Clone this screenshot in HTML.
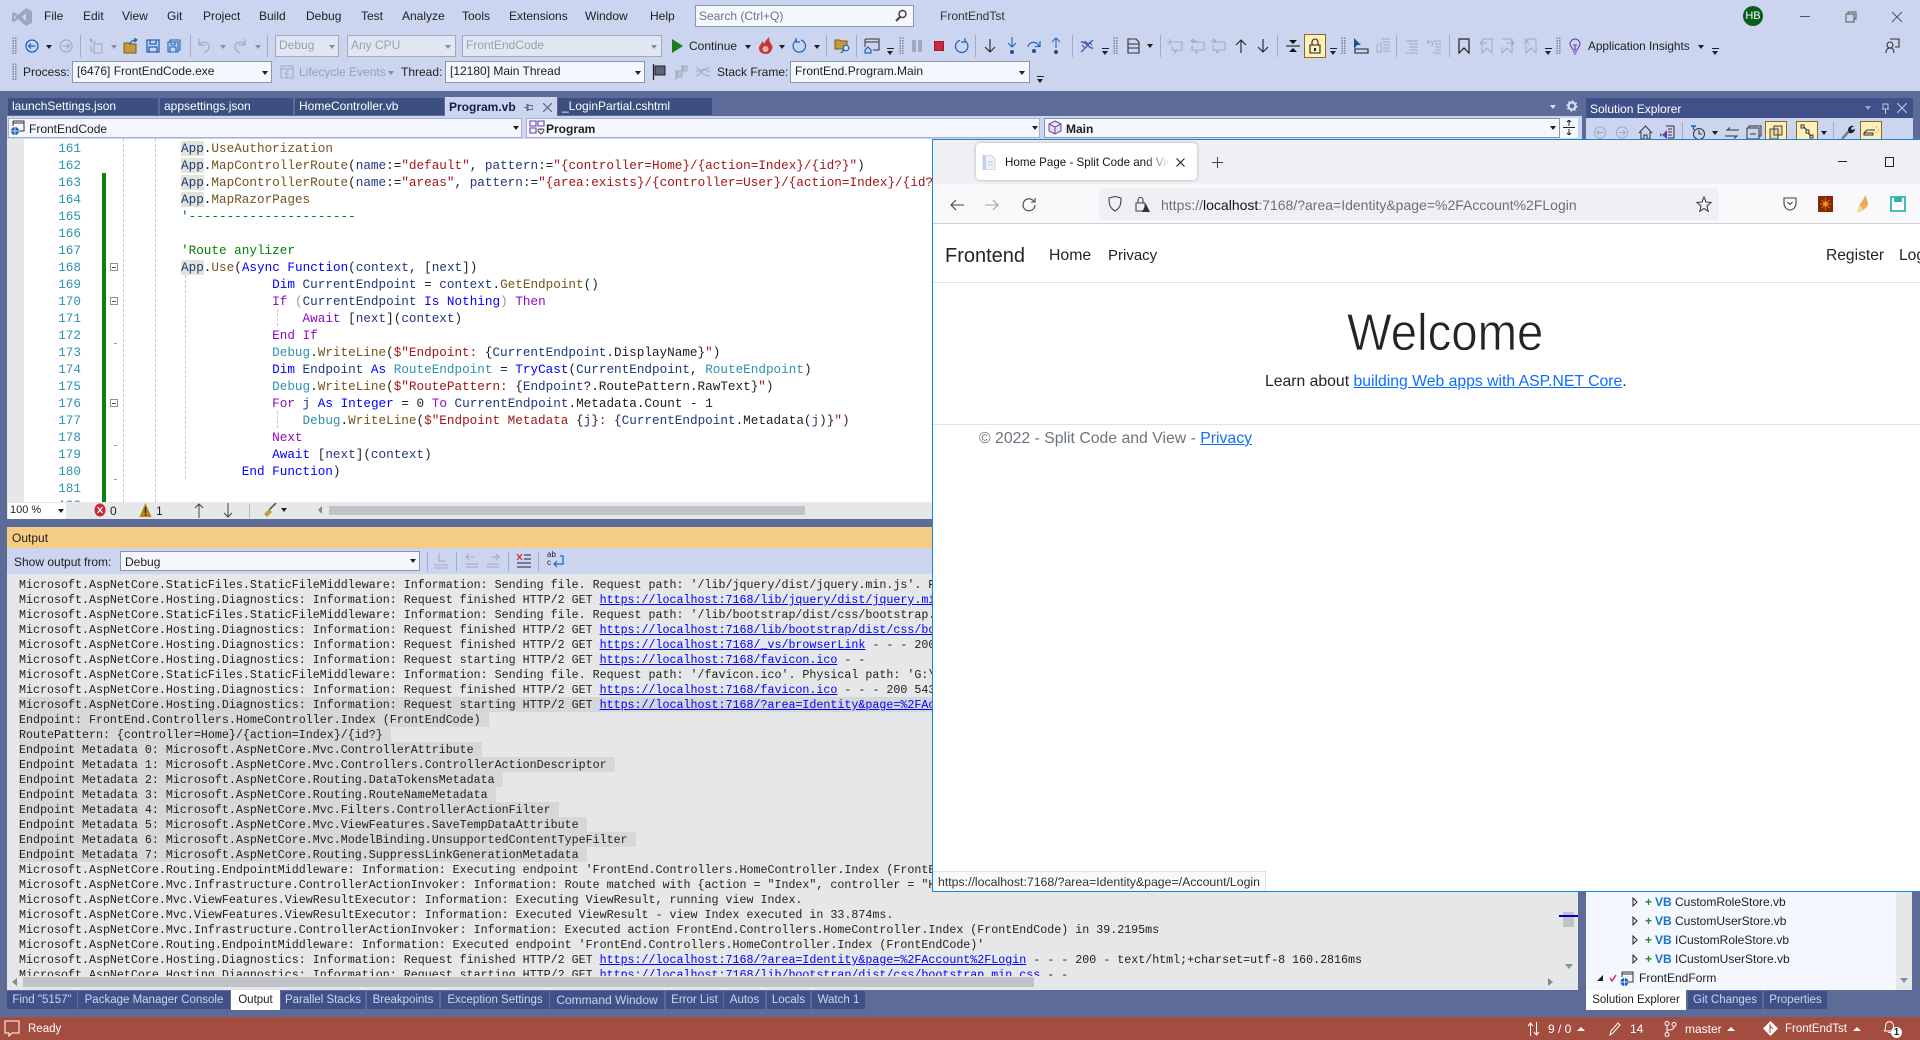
<!DOCTYPE html>
<html><head><meta charset="utf-8"><title>FrontEndTst</title>
<style>
*{box-sizing:border-box}
html,body{margin:0;padding:0;width:1920px;height:1040px;overflow:hidden;background:#5d6b99;font:12px "Liberation Sans",sans-serif;color:#1e1e1e}
.a,svg.i{position:absolute}
.t{position:absolute;white-space:pre;line-height:16px}
.g{color:#9aa0ae}
.sep{position:absolute;width:1px;height:22px;background:#9fabc8;top:35px}
.combo{position:absolute;background:#f5f7fe;border:1px solid #8e96ab;line-height:19px;padding-left:4px;white-space:pre;overflow:hidden}
.dis{background:#e1e6f2;border-color:#a2a9ba;color:#9aa0ae;padding-left:3px}
.dd{position:absolute;width:0;height:0;border-left:3.5px solid transparent;border-right:3.5px solid transparent;border-top:4px solid #1e1e1e}
.dd.gr{border-top-color:#888fa0}
.up{position:absolute;width:0;height:0;border-left:4px solid transparent;border-right:4px solid transparent;border-bottom:4px solid #fff}
.ov{position:absolute;width:7px;height:7px;border-top:1px solid #222}
.ov:after{content:"";position:absolute;left:0;top:2px;border-left:3.5px solid transparent;border-right:3.5px solid transparent;border-top:4px solid #222}
.grip{position:absolute;width:5px;height:17px;background-image:radial-gradient(#7b8299 .7px,transparent 1px);background-size:2.5px 2.5px}
.tab{position:absolute;top:98px;height:17px;background:#3b4f81;color:#fff;line-height:17px;white-space:pre}
.btab{position:absolute;top:991px;height:18px;background:#3f5188;color:#ccd5f0;line-height:19px;font-size:11.5px;text-align:center;white-space:pre}
#code{position:absolute;left:7px;top:139px;width:926px;height:363px;background:#fff;overflow:hidden}
#code .l{position:absolute;left:174px;margin-top:1px;font:12.67px/17px "Liberation Mono",monospace;white-space:pre;color:#1e1e1e}
#code .n{position:absolute;left:37px;width:37px;margin-top:1px;text-align:right;font:12.67px/17px "Liberation Mono",monospace;color:#2b91af}
.k{color:#00f}.c{color:#8f08c4}.s{color:#a31515}.y{color:#2b91af}.m{color:#74531f}.v{color:#1f377f}#code .cm{color:#008000}.h{background:#e0e5d8;color:#1f377f}
#out{position:absolute;left:7px;top:574px;width:1571px;height:402px;overflow:hidden;background:#e6e7e8;font:11.67px/17px "Liberation Mono",monospace;color:#1e1e1e}
#out div{position:absolute;left:12px;white-space:pre;height:15px}
#out a{color:#00f;text-decoration:underline}
#out b{font-weight:400;background:#d6d7d9;display:inline-block;padding-right:8px;height:15px}
.fold{position:absolute;left:103px;width:8px;height:8px;border:1px solid #8a8f99;background:#fff}
.fold:after{content:"";position:absolute;left:1px;top:2.5px;width:4px;height:1px;background:#555}
#br{position:absolute;left:932px;top:139px;width:988px;height:753px;background:#fff;border-left:1px solid #1883d7;border-top:1px solid #1883d7;border-bottom:1px solid #1883d7;overflow:hidden;color:#212529}
</style></head><body>

<!-- top chrome -->
<div class="a" style="left:0;top:0;width:1920px;height:91px;background:#ccd5f0"></div>
<svg class="i" style="left:11px;top:7px" width="22" height="20" viewBox="0 0 22 20"><path d="M15 1l6 3v12l-6 3-8-7-4 3-2-1V6l2-1 4 3zM15 6l-4 4 4 4zM3 8v4l2-2z" fill="#9aa6c6" fill-rule="evenodd"/></svg>
<span class="t" style="left:44px;top:8px">File</span>
<span class="t" style="left:83px;top:8px">Edit</span>
<span class="t" style="left:122px;top:8px">View</span>
<span class="t" style="left:167px;top:8px">Git</span>
<span class="t" style="left:203px;top:8px">Project</span>
<span class="t" style="left:259px;top:8px">Build</span>
<span class="t" style="left:306px;top:8px">Debug</span>
<span class="t" style="left:361px;top:8px">Test</span>
<span class="t" style="left:402px;top:8px">Analyze</span>
<span class="t" style="left:462px;top:8px">Tools</span>
<span class="t" style="left:509px;top:8px">Extensions</span>
<span class="t" style="left:585px;top:8px">Window</span>
<span class="t" style="left:650px;top:8px">Help</span>
<div class="a" style="left:695px;top:5px;width:219px;height:22px;background:#f5f7fe;border:1px solid #8e96ab"></div>
<span class="t" style="left:699px;top:8px;color:#6d7486">Search (Ctrl+Q)</span>
<svg class="i" style="left:893px;top:8px" width="16" height="16" viewBox="0 0 16 16"><circle cx="9.5" cy="6" r="3.5" fill="none" stroke="#444" stroke-width="1.5"/><path d="M7 9l-4 4" stroke="#444" stroke-width="2"/></svg>
<span class="t" style="left:940px;top:8px;color:#333">FrontEndTst</span>
<div class="a" style="left:1743px;top:6px;width:20px;height:20px;border-radius:50%;background:#0a5c1e;color:#fff;font-size:11px;line-height:20px;text-align:center">HB</div>
<div class="a" style="left:1800px;top:16px;width:10px;height:1px;background:#555"></div>
<svg class="i" style="left:1845px;top:11px" width="12" height="12" viewBox="0 0 12 12"><path d="M3 3V1h8v7H9M1 3h8v8H1z" fill="none" stroke="#555"/></svg>
<svg class="i" style="left:1891px;top:11px" width="12" height="12" viewBox="0 0 12 12"><path d="M1 1l10 10M11 1L1 11" stroke="#555"/></svg>

<!-- toolbar row 1 -->
<div class="grip" style="left:12px;top:37px"></div>
<svg class="i" style="left:25px;top:39px" width="14" height="14" viewBox="0 0 14 14"><circle cx="7" cy="7" r="6" fill="none" stroke="#1c63b8" stroke-width="1.3"/><path d="M10.5 7h-7M6 4.5L3.5 7 6 9.5" fill="none" stroke="#1c63b8" stroke-width="1.2"/></svg>
<div class="dd" style="left:46px;top:45px"></div>
<svg class="i" style="left:59px;top:39px" width="14" height="14" viewBox="0 0 14 14"><circle cx="7" cy="7" r="6" fill="none" stroke="#a2a9ba" stroke-width="1.2"/><path d="M3.5 7h7M8 4.5L10.5 7 8 9.5" fill="none" stroke="#a2a9ba" stroke-width="1.2"/></svg>
<div class="sep" style="left:80px"></div>
<svg class="i" style="left:88px;top:38px" width="16" height="16" viewBox="0 0 16 16"><path d="M6 6h8v9H6zM3 4h5M3 8v5h3" fill="none" stroke="#a2a9ba"/><path d="M2 1l2 2M4 1L2 3M1 2h4M3 0v4" stroke="#a2a9ba" stroke-width=".7"/></svg>
<div class="dd gr" style="left:111px;top:45px"></div>
<svg class="i" style="left:123px;top:38px" width="16" height="16" viewBox="0 0 16 16"><path d="M1 5h5l1 1h6v9H1z" fill="#c49a3c" stroke="#7a5b12"/><path d="M7 6c1-3 3-4 6-4M11 0l3 2-3 2" fill="none" stroke="#1c63b8" stroke-width="1.2"/></svg>
<svg class="i" style="left:146px;top:39px" width="14" height="14" viewBox="0 0 14 14"><path d="M1 1h12v12H1zM4 1v4h6V1M3 13V8h8v5" fill="none" stroke="#1c63b8" stroke-width="1.3"/></svg>
<svg class="i" style="left:167px;top:39px" width="14" height="14" viewBox="0 0 14 14"><path d="M3 3V1h10v10h-2M1 3h10v10H1zM4 3v3h4V3M3 13V8h6v5" fill="none" stroke="#1c63b8" stroke-width="1.1"/></svg>
<div class="sep" style="left:190px"></div>
<svg class="i" style="left:197px;top:38px" width="14" height="16" viewBox="0 0 14 16"><path d="M2 1v6h6M2 7c3-5 10-3 10 2 0 3-3 5-5 6" fill="none" stroke="#a2a9ba" stroke-width="1.2"/></svg>
<div class="dd gr" style="left:220px;top:45px"></div>
<svg class="i" style="left:233px;top:38px" width="14" height="16" viewBox="0 0 14 16"><path d="M12 1v6H6M12 7C9 2 2 4 2 9c0 3 3 5 5 6" fill="none" stroke="#a2a9ba" stroke-width="1.2"/></svg>
<div class="dd gr" style="left:255px;top:45px"></div>
<div class="sep" style="left:267px"></div>
<div class="combo dis" style="left:275px;top:35px;width:64px;height:22px">Debug</div><div class="dd gr" style="left:329px;top:45px"></div>
<div class="combo dis" style="left:347px;top:35px;width:109px;height:22px">Any CPU</div><div class="dd gr" style="left:445px;top:45px"></div>
<div class="combo dis" style="left:462px;top:35px;width:200px;height:22px">FrontEndCode</div><div class="dd gr" style="left:651px;top:45px"></div>
<svg class="i" style="left:671px;top:39px" width="12" height="14" viewBox="0 0 12 14"><path d="M1 0l11 7-11 7z" fill="#1f7a1f"/></svg>
<span class="t" style="left:689px;top:38px">Continue</span><div class="dd" style="left:745px;top:45px"></div>
<svg class="i" style="left:758px;top:37px" width="16" height="18" viewBox="0 0 16 18"><path d="M8 17c-4 0-7-2-7-6 0-3 3-4 3-7 1 1 2 2 2 3 1-2 2-5 6-7-2 3 0 5 1 7 1 1 2 3 1 5-1 3-3 5-6 5z" fill="#c8323c"/><circle cx="7.5" cy="12" r="3" fill="#f0b4a8"/></svg>
<div class="dd" style="left:779px;top:45px"></div>
<svg class="i" style="left:792px;top:38px" width="15" height="16" viewBox="0 0 15 16"><path d="M9 2a6.2 6.2 0 1 1-4 .2M4 0v4h4" fill="none" stroke="#1c63b8" stroke-width="1.2"/></svg>
<div class="dd" style="left:814px;top:45px"></div>
<div class="sep" style="left:826px"></div>
<svg class="i" style="left:834px;top:38px" width="17" height="16" viewBox="0 0 17 16"><path d="M1 2h5l1 1h6v8H1z" fill="#c49a3c" stroke="#7a5b12"/><circle cx="12" cy="10" r="2.8" fill="#dbe4f4" stroke="#1c63b8" stroke-width="1.2"/><path d="M10 12l-3 3" stroke="#1c63b8" stroke-width="1.4"/></svg>
<div class="sep" style="left:856px"></div>
<svg class="i" style="left:864px;top:38px" width="16" height="16" viewBox="0 0 16 16"><path d="M1 1h14v11H9M1 4h14M1 1v8" fill="none" stroke="#333"/><path d="M1 12l3-3 3 3v3H1z" fill="none" stroke="#1c63b8" stroke-width="1.2"/></svg>
<div class="ov" style="left:887px;top:48px"></div>
<div class="grip" style="left:899px;top:37px"></div>
<div class="a" style="left:912px;top:40px;width:4px;height:12px;background:#a2a9ba"></div><div class="a" style="left:918px;top:40px;width:4px;height:12px;background:#a2a9ba"></div>
<div class="a" style="left:934px;top:41px;width:10px;height:10px;background:#c8283c;border:1px solid #a01b2c"></div>
<svg class="i" style="left:954px;top:38px" width="15" height="16" viewBox="0 0 15 16"><path d="M11 3a6.2 6.2 0 1 1-5-.7M11 0v4H7" fill="none" stroke="#1c63b8" stroke-width="1.2"/></svg>
<div class="sep" style="left:975px"></div>
<svg class="i" style="left:984px;top:38px" width="12" height="16" viewBox="0 0 12 16"><path d="M6 1v13M1 9l5 5 5-5" fill="none" stroke="#222" stroke-width="1.1"/></svg>
<svg class="i" style="left:1006px;top:37px" width="12" height="18" viewBox="0 0 12 18"><path d="M6 0v10M2 6l4 4 4-4" fill="none" stroke="#1c63b8" stroke-width="1.1"/><circle cx="6" cy="15" r="2" fill="#1c4f94"/></svg>
<svg class="i" style="left:1026px;top:38px" width="16" height="16" viewBox="0 0 16 16"><path d="M2 9c1-6 9-6 11-1M14 3v5.5H9" fill="none" stroke="#1c63b8" stroke-width="1.2"/><circle cx="8" cy="13" r="2" fill="#1c4f94"/></svg>
<svg class="i" style="left:1050px;top:37px" width="12" height="18" viewBox="0 0 12 18"><path d="M6 11V1M2 5l4-4 4 4" fill="none" stroke="#1c63b8" stroke-width="1.1"/><circle cx="6" cy="15" r="2" fill="#1c4f94"/></svg>
<div class="sep" style="left:1072px"></div>
<svg class="i" style="left:1079px;top:38px" width="16" height="16" viewBox="0 0 16 16"><path d="M2 14C7 10 9 6 14 2M2 4c5-1 8 7 12 6" fill="none" stroke="#1c63b8" stroke-width="1.3"/><path d="M3 7l3 3M10 4l3 3M6 3l3 3" stroke="#7f3fa8" stroke-width="1.2"/></svg>
<div class="ov" style="left:1102px;top:48px"></div>
<div class="grip" style="left:1113px;top:37px"></div>
<svg class="i" style="left:1127px;top:38px" width="13" height="16" viewBox="0 0 13 16"><path d="M1 1h8l3 3v11H1zM1 6h11M1 10h11" fill="none" stroke="#333" stroke-width="1.1"/></svg>
<div class="dd" style="left:1147px;top:44px"></div>
<div class="sep" style="left:1160px"></div>
<svg class="i" style="left:1167px;top:38px" width="16" height="16" viewBox="0 0 16 16"><path d="M7 4h8v8h-5l-2 3v-3H5V8M3 1v6M0 4h6" fill="none" stroke="#a2a9ba" stroke-width="1.1"/></svg>
<svg class="i" style="left:1189px;top:38px" width="16" height="16" viewBox="0 0 16 16"><path d="M4 4h11v8H9l-2 3v-3H3V7M5 1L2 3l3 2M2 3h6" fill="none" stroke="#a2a9ba" stroke-width="1.1"/></svg>
<svg class="i" style="left:1210px;top:38px" width="16" height="16" viewBox="0 0 16 16"><path d="M4 4h11v8H9l-2 3v-3H3V7M3 1l3 2-3 2M6 3H0" fill="none" stroke="#a2a9ba" stroke-width="1.1"/></svg>
<svg class="i" style="left:1235px;top:38px" width="12" height="16" viewBox="0 0 12 16"><path d="M6 15V2M1 7l5-5 5 5" fill="none" stroke="#222" stroke-width="1.1"/></svg>
<svg class="i" style="left:1257px;top:38px" width="12" height="16" viewBox="0 0 12 16"><path d="M6 1v13M1 9l5 5 5-5" fill="none" stroke="#222" stroke-width="1.1"/></svg>
<div class="sep" style="left:1277px"></div>
<svg class="i" style="left:1285px;top:38px" width="16" height="16" viewBox="0 0 16 16"><path d="M1 8h14" stroke="#111"/><path d="M4 2h8L8 6zM4 14h8l-4-4z" fill="#111"/></svg>
<div class="a" style="left:1304px;top:34px;width:22px;height:24px;background:#ffefbb;border:1px solid #8a6a1c"></div>
<svg class="i" style="left:1308px;top:38px" width="14" height="16" viewBox="0 0 14 16"><path d="M2 7h10v8H2zM4 7V4a3 3 0 0 1 6 0v3" fill="none" stroke="#222" stroke-width="1.1"/><rect x="6" y="10" width="2" height="3" fill="#222"/></svg>
<div class="ov" style="left:1330px;top:48px"></div>
<div class="grip" style="left:1341px;top:37px"></div>
<svg class="i" style="left:1352px;top:38px" width="17" height="16" viewBox="0 0 17 16"><path d="M2 0l7 7H5l-3 4z" fill="#1c4f94"/><path d="M3 11h13v4H3z" fill="none" stroke="#222" stroke-width="1.1"/></svg>
<svg class="i" style="left:1375px;top:38px" width="16" height="16" viewBox="0 0 16 16"><path d="M6 1h9M8 4h7M8 7h7M8 10h7M8 13h7M6 4v10H2V7l2-2" fill="none" stroke="#a2a9ba"/></svg>
<div class="sep" style="left:1396px"></div>
<svg class="i" style="left:1405px;top:38px" width="14" height="16" viewBox="0 0 14 16"><path d="M1 3h12M4 6h9M4 9h9M4 12h9M1 15h12" stroke="#a2a9ba"/></svg>
<svg class="i" style="left:1426px;top:38px" width="15" height="16" viewBox="0 0 15 16"><path d="M7 3h8M9 6h6M9 9h6M9 12h6M7 15h8M1 4l2-2M1 4l2 2M1 4h4c2 0 2 4 0 4" fill="none" stroke="#a2a9ba"/></svg>
<div class="sep" style="left:1449px"></div>
<svg class="i" style="left:1458px;top:38px" width="12" height="16" viewBox="0 0 12 16"><path d="M1 1h10v14l-5-5-5 5z" fill="none" stroke="#222" stroke-width="1.2"/></svg>
<svg class="i" style="left:1479px;top:38px" width="14" height="16" viewBox="0 0 14 16"><path d="M3 1h10v14l-5-5-5 5V9M1 5l3-3M1 5l3 3M1 5h7" fill="none" stroke="#a2a9ba"/></svg>
<svg class="i" style="left:1501px;top:38px" width="14" height="16" viewBox="0 0 14 16"><path d="M1 1h10v14l-5-5-5 5V9M13 5l-3-3M13 5l-3 3M13 5H6" fill="none" stroke="#a2a9ba"/></svg>
<svg class="i" style="left:1523px;top:38px" width="14" height="16" viewBox="0 0 14 16"><path d="M3 1h10v14l-5-5-5 5V7M1 1l5 5M6 1L1 6" fill="none" stroke="#a2a9ba"/></svg>
<div class="ov" style="left:1545px;top:48px"></div>
<div class="grip" style="left:1556px;top:37px"></div>
<svg class="i" style="left:1569px;top:38px" width="12" height="17" viewBox="0 0 12 17"><path d="M4 12C3 9 1 8 1 6a5 5 0 0 1 10 0c0 2-2 3-3 6zM4 14h4M5 16h2M6 12V7M4 7h4" fill="none" stroke="#6a3da8" stroke-width="1.1"/></svg>
<span class="t" style="left:1588px;top:38px;font-size:11.8px">Application Insights</span>
<div class="dd" style="left:1698px;top:45px"></div>
<div class="ov" style="left:1712px;top:48px"></div>
<svg class="i" style="left:1884px;top:38px" width="16" height="16" viewBox="0 0 16 16"><path d="M6 1h9v8h-4M2 15c0-4 2-5 4-5s4 1 4 5" fill="none" stroke="#333" stroke-width="1.1"/><circle cx="6" cy="7" r="3" fill="#ccd5f0" stroke="#333" stroke-width="1.1"/></svg>

<!-- toolbar row 2 -->
<div class="grip" style="left:12px;top:63px"></div>
<span class="t" style="left:23px;top:64px">Process:</span>
<div class="combo" style="left:72px;top:61px;width:200px;height:22px">[6476] FrontEndCode.exe</div><div class="dd" style="left:262px;top:71px"></div>
<svg class="i" style="left:280px;top:65px" width="14" height="14" viewBox="0 0 14 14"><path d="M1 1h12v12H1zM1 4h12" fill="none" stroke="#a2a9ba"/><path d="M8 5l-3 4h3l-2 4" fill="none" stroke="#a2a9ba"/></svg>
<span class="t g" style="left:299px;top:64px">Lifecycle Events</span><div class="dd gr" style="left:388px;top:71px"></div>
<span class="t" style="left:401px;top:64px">Thread:</span>
<div class="combo" style="left:445px;top:61px;width:200px;height:22px">[12180] Main Thread</div><div class="dd" style="left:635px;top:71px"></div>
<svg class="i" style="left:652px;top:64px" width="14" height="16" viewBox="0 0 14 16"><path d="M1.5 0v16" stroke="#222" stroke-width="1.2"/><path d="M3 2h10v9H3z" fill="#5e6470" stroke="#222"/></svg>
<svg class="i" style="left:673px;top:64px" width="15" height="16" viewBox="0 0 15 16"><path d="M3 6v10M9 1v8" stroke="#a2a9ba"/><path d="M4 7h5v6H4zM10 2h4v5h-4z" fill="#bcc3d4" stroke="#a2a9ba"/></svg>
<svg class="i" style="left:695px;top:66px" width="16" height="12" viewBox="0 0 16 12"><path d="M1 2c4 0 5 8 14 8M1 10c4 0 5-8 14-8M1 6c3-3 10-3 14 0" fill="none" stroke="#a2a9ba"/></svg>
<span class="t" style="left:717px;top:64px">Stack Frame:</span>
<div class="combo" style="left:790px;top:61px;width:240px;height:22px">FrontEnd.Program.Main</div><div class="dd" style="left:1019px;top:71px"></div>
<div class="ov" style="left:1037px;top:76px"></div>

<!-- document tabs -->
<div class="tab" style="left:8px;width:150px;padding-left:4px">launchSettings.json</div>
<div class="tab" style="left:160px;width:133px;padding-left:4px">appsettings.json</div>
<div class="tab" style="left:295px;width:149px;padding-left:4px">HomeController.vb</div>
<div class="a" style="left:445px;top:97px;width:112px;height:19px;background:#ccd5f0"></div>
<span class="t" style="left:449px;top:99px;font-weight:bold;color:#0e1f47">Program.vb</span>
<svg class="i" style="left:524px;top:103px" width="9" height="9" viewBox="0 0 9 9"><path d="M0 4.5h3M3 1.5h1v6H3zM4 2.5h5v4H4" fill="none" stroke="#5e6a85"/></svg>
<svg class="i" style="left:543px;top:103px" width="9" height="9" viewBox="0 0 9 9"><path d="M0 0l9 9M9 0L0 9" stroke="#5e6a85" stroke-width="1.2"/></svg>
<div class="tab" style="left:558px;width:154px;padding-left:4px">_LoginPartial.cshtml</div>
<div class="dd" style="left:1550px;top:105px;border-top-color:#d8def0"></div>
<svg class="i" style="left:1566px;top:100px" width="12" height="12" viewBox="0 0 12 12"><circle cx="6" cy="6" r="3.5" fill="none" stroke="#d8def0" stroke-width="2.2"/><circle cx="6" cy="6" r="5" fill="none" stroke="#d8def0" stroke-width="1.4" stroke-dasharray="1.6 2.3"/></svg>

<!-- nav combos -->
<div class="a" style="left:7px;top:116px;width:1575px;height:23px;background:#ccd5f0"></div>
<div class="combo" style="left:8px;top:118px;width:514px;height:20px;padding-left:20px;border-color:#a9b2cd;line-height:20px">FrontEndCode</div>
<svg class="i" style="left:10px;top:120px" width="16" height="16" viewBox="0 0 16 16"><path d="M3 1h11v10H8M3 1v5M3 3h11" fill="none" stroke="#333"/><circle cx="5" cy="11" r="4" fill="#1c63b8"/><path d="M1 11h8M5 7v8" stroke="#fff" stroke-width=".7"/></svg>
<div class="dd" style="left:513px;top:126px"></div>
<div class="combo" style="left:526px;top:118px;width:514px;height:20px;padding-left:19px;border-color:#a9b2cd;line-height:20px;font-weight:bold">Program</div>
<svg class="i" style="left:529px;top:120px" width="16" height="15" viewBox="0 0 16 15"><path d="M1 1h6v5H1zM9 1h6v5H9zM1 8h6v5H1z" fill="none" stroke="#6a3da8" stroke-width="1.1"/><path d="M9 10c1-2 3-1 3 0 0-1 2-2 3 0 0 2-3 4-3 4s-3-2-3-4z" fill="#eee" stroke="#444"/></svg>
<div class="dd" style="left:1032px;top:126px"></div>
<div class="combo" style="left:1044px;top:118px;width:516px;height:20px;padding-left:21px;border-color:#8e96ab;line-height:20px;font-weight:bold">Main</div>
<svg class="i" style="left:1048px;top:120px" width="14" height="15" viewBox="0 0 14 15"><path d="M7 1l6 3v7l-6 3-6-3V4zM1 4l6 3 6-3M7 7v7" fill="#e4dcf2" stroke="#6a3da8"/></svg>
<div class="dd" style="left:1550px;top:126px"></div>
<div class="a" style="left:1560px;top:118px;width:18px;height:20px;background:#f5f7fe"></div>
<svg class="i" style="left:1563px;top:120px" width="12" height="15" viewBox="0 0 12 15"><path d="M0 7.5h12" stroke="#222"/><path d="M6 0v6M6 9v6M4 2l2-2 2 2M4 13l2 2 2-2" fill="none" stroke="#222"/></svg>

<!-- solution explorer head -->
<div class="a" style="left:1586px;top:98px;width:327px;height:20px;background:#3f5188"></div>
<span class="t" style="left:1590px;top:101px;color:#fff">Solution Explorer</span>
<div class="dd" style="left:1865px;top:106px;border-top-color:#9ba8cc"></div>
<svg class="i" style="left:1881px;top:103px" width="9" height="11" viewBox="0 0 9 11"><path d="M2 1h5v5H2zM1 6h7M4.500 6v5" fill="none" stroke="#c3cce3"/></svg>
<svg class="i" style="left:1897px;top:103px" width="10" height="10" viewBox="0 0 10 10"><path d="M0 0l10 10M10 0L0 10" stroke="#c3cce3" stroke-width="1.1"/></svg>
<div class="a" style="left:1586px;top:118px;width:327px;height:21px;background:#ccd5f0;overflow:hidden"></div>
<svg class="i" style="left:1593px;top:126px" width="14" height="13" viewBox="0 0 14 14"><circle cx="7" cy="7" r="6" fill="none" stroke="#a2a9ba"/><path d="M10.500 7h-7M6 4.500L3.500 7 6 9.500" fill="none" stroke="#a2a9ba"/></svg>
<svg class="i" style="left:1615px;top:126px" width="14" height="13" viewBox="0 0 14 14"><circle cx="7" cy="7" r="6" fill="none" stroke="#a2a9ba"/><path d="M3.500 7h7M8 4.500L10.500 7 8 9.500" fill="none" stroke="#a2a9ba"/></svg>
<svg class="i" style="left:1638px;top:125px" width="15" height="14" viewBox="0 0 15 14"><path d="M1 8l6.500-7L14 8M3 7v7h3v-4h3v4h3V7" fill="none" stroke="#333"/></svg>
<svg class="i" style="left:1659px;top:125px" width="16" height="14" viewBox="0 0 16 14"><path d="M7 1h8v12H9M9 4h4M9 7h4M9 10h4" fill="none" stroke="#333"/><path d="M1 8l2 2 5-5v9l-5-4-2 2z" fill="#6a3da8"/></svg>
<div class="a" style="left:1682px;top:122px;width:1px;height:17px;background:#9fabc8"></div>
<svg class="i" style="left:1690px;top:125px" width="16" height="14" viewBox="0 0 16 14"><circle cx="9" cy="9" r="5.500" fill="none" stroke="#333"/><path d="M9 5v4h3" fill="none" stroke="#333"/><path d="M1 1h5M3.500 1v4" stroke="#1c63b8" stroke-width="1.400"/></svg>
<div class="dd" style="left:1712px;top:131px"></div>
<svg class="i" style="left:1725px;top:127px" width="14" height="12" viewBox="0 0 14 12"><path d="M14 3H2l3-2.500M0 9h12L9 11.500" fill="none" stroke="#333"/></svg>
<svg class="i" style="left:1746px;top:125px" width="16" height="14" viewBox="0 0 16 14"><path d="M3 3V1h12v10h-2M1 3h12v11H1zM4 9h6" fill="none" stroke="#333"/></svg>
<div class="a" style="left:1765px;top:121px;width:22px;height:18px;background:#ffefbb;border:1px solid #8a6a1c;border-bottom:0"></div>
<svg class="i" style="left:1769px;top:125px" width="14" height="14" viewBox="0 0 14 14"><path d="M5 1h8v9H5zM1 4h8v10H1z" fill="#dcc896" fill-opacity=".6" stroke="#444"/></svg>
<div class="a" style="left:1796px;top:121px;width:22px;height:18px;background:#ffefbb;border:1px solid #8a6a1c;border-bottom:0"></div>
<svg class="i" style="left:1800px;top:124px" width="14" height="15" viewBox="0 0 14 15"><path d="M1 1h3v3H1zM6 6h3v3H6zM10 11h3v3h-3zM4 3l3 3M8 9l3 3" fill="none" stroke="#333"/></svg>
<div class="dd" style="left:1821px;top:131px"></div>
<div class="a" style="left:1833px;top:122px;width:1px;height:17px;background:#9fabc8"></div>
<svg class="i" style="left:1841px;top:124px" width="15" height="15" viewBox="0 0 15 15"><path d="M1 15l7-8" stroke="#777" stroke-width="2.400"/><path d="M7 6c0-3 3-5 6-4l-3 2 1 2 3-1c0 3-3 5-6 4z" fill="#222"/></svg>
<div class="a" style="left:1860px;top:121px;width:22px;height:18px;background:#ffefbb;border:1px solid #8a6a1c;border-bottom:0"></div>
<svg class="i" style="left:1863px;top:125px" width="16" height="13" viewBox="0 0 16 13"><path d="M1 8l3-3h8M1 8h9v2H1z" fill="none" stroke="#333"/><path d="M13 2h1M15 5h1M13 7h1" stroke="#b8860b"/></svg>

<!-- editor -->
<div id="code">
<div class="a" style="left:0;top:0;width:17px;height:363px;background:#e6e7e8"></div>
<div class="a" style="left:95px;top:34px;width:4px;height:329px;background:#108010"></div>
<div class="a" style="left:116px;top:0;width:0;height:363px;border-left:1px dashed #c8c8c8"></div>
<div class="a" style="left:148px;top:0;width:0;height:363px;border-left:1px dashed #c8c8c8"></div>
<div class="a" style="left:178px;top:136px;width:0;height:204px;border-left:1px dashed #c8c8c8"></div>
<div class="a" style="left:270px;top:170px;width:0;height:17px;border-left:1px dashed #c8c8c8"></div>
<div class="a" style="left:270px;top:272px;width:0;height:17px;border-left:1px dashed #c8c8c8"></div>
<div class="fold" style="top:124px"></div><div class="fold" style="top:158px"></div><div class="fold" style="top:260px"></div>
<div class="a" style="left:107px;top:204px;width:3px;height:1px;background:#999"></div>
<div class="a" style="left:107px;top:306px;width:3px;height:1px;background:#999"></div>
<div class="a" style="left:107px;top:340px;width:3px;height:1px;background:#999"></div>
<div class="n" style="top:0">161</div><div class="n" style="top:17px">162</div><div class="n" style="top:34px">163</div><div class="n" style="top:51px">164</div><div class="n" style="top:68px">165</div><div class="n" style="top:85px">166</div><div class="n" style="top:102px">167</div><div class="n" style="top:119px">168</div><div class="n" style="top:136px">169</div><div class="n" style="top:153px">170</div><div class="n" style="top:170px">171</div><div class="n" style="top:187px">172</div><div class="n" style="top:204px">173</div><div class="n" style="top:221px">174</div><div class="n" style="top:238px">175</div><div class="n" style="top:255px">176</div><div class="n" style="top:272px">177</div><div class="n" style="top:289px">178</div><div class="n" style="top:306px">179</div><div class="n" style="top:323px">180</div><div class="n" style="top:340px">181</div><div class="n" style="top:357px">182</div>
<div class="l" style="top:0"><span class="h">App</span>.<span class="m">UseAuthorization</span></div>
<div class="l" style="top:17px"><span class="h">App</span>.<span class="m">MapControllerRoute</span>(<span class="v">name</span>:=<span class="s">"default"</span>, <span class="v">pattern</span>:=<span class="s">"{controller=Home}/{action=Index}/{id?}"</span>)</div>
<div class="l" style="top:34px"><span class="h">App</span>.<span class="m">MapControllerRoute</span>(<span class="v">name</span>:=<span class="s">"areas"</span>, <span class="v">pattern</span>:=<span class="s">"{area:exists}/{controller=User}/{action=Index}/{id?}"</span>)</div>
<div class="l" style="top:51px"><span class="h">App</span>.<span class="m">MapRazorPages</span></div>
<div class="l cm" style="top:68px">'----------------------</div>
<div class="l cm" style="top:102px">'Route anylizer</div>
<div class="l" style="top:119px"><span class="h">App</span>.<span class="m">Use</span>(<span class="k">Async</span> <span class="k">Function</span>(<span class="v">context</span>, [<span class="v">next</span>])</div>
<div class="l" style="top:136px">            <span class="k">Dim</span> <span class="v">CurrentEndpoint</span> = <span class="v">context</span>.<span class="m">GetEndpoint</span>()</div>
<div class="l" style="top:153px">            <span class="c">If</span> <span style="color:#999">(</span><span class="v">CurrentEndpoint</span> <span class="k">Is</span> <span class="k">Nothing</span><span style="color:#999">)</span> <span class="c">Then</span></div>
<div class="l" style="top:170px">                <span class="c">Await</span> [<span class="v">next</span>](<span class="v">context</span>)</div>
<div class="l" style="top:187px">            <span class="c">End If</span></div>
<div class="l" style="top:204px">            <span class="y">Debug</span>.<span class="m">WriteLine</span>(<span class="s">$"Endpoint: </span>{<span class="v">CurrentEndpoint</span>.DisplayName}<span class="s">"</span>)</div>
<div class="l" style="top:221px">            <span class="k">Dim</span> <span class="v">Endpoint</span> <span class="k">As</span> <span class="y">RouteEndpoint</span> = <span class="k">TryCast</span>(<span class="v">CurrentEndpoint</span>, <span class="y">RouteEndpoint</span>)</div>
<div class="l" style="top:238px">            <span class="y">Debug</span>.<span class="m">WriteLine</span>(<span class="s">$"RoutePattern: </span>{<span class="v">Endpoint</span>?.RoutePattern.RawText}<span class="s">"</span>)</div>
<div class="l" style="top:255px">            <span class="c">For</span> <span class="v">j</span> <span class="k">As</span> <span class="k">Integer</span> = 0 <span class="c">To</span> <span class="v">CurrentEndpoint</span>.Metadata.Count - 1</div>
<div class="l" style="top:272px">                <span class="y">Debug</span>.<span class="m">WriteLine</span>(<span class="s">$"Endpoint Metadata </span>{<span class="v">j</span>}<span class="s">: </span>{<span class="v">CurrentEndpoint</span>.Metadata(<span class="v">j</span>)}<span class="s">"</span>)</div>
<div class="l" style="top:289px">            <span class="c">Next</span></div>
<div class="l" style="top:306px">            <span class="k">Await</span> [<span class="v">next</span>](<span class="v">context</span>)</div>
<div class="l" style="top:323px">        <span class="k">End Function</span>)</div>
</div>
<!-- editor bottom bar -->
<div class="a" style="left:7px;top:502px;width:926px;height:17px;background:#e6e7e8"></div>
<div class="a" style="left:8px;top:503px;width:58px;height:16px;background:#fff;line-height:15px;font-size:11px;padding-left:2px">100 %</div><div class="dd" style="left:58px;top:509px"></div>
<svg class="i" style="left:94px;top:503px" width="12" height="14" viewBox="0 0 12 14"><ellipse cx="6" cy="7" rx="5.500" ry="6.500" fill="#c8283c"/><path d="M3.500 4l5 6M8.500 4l-5 6" stroke="#fff" stroke-width="1.200"/></svg>
<span class="t" style="left:110px;top:503px">0</span>
<svg class="i" style="left:139px;top:503px" width="13" height="14" viewBox="0 0 13 14"><path d="M6.500 0l6 14H.500z" fill="#b8860b"/><path d="M6.500 4v6M6.500 11v1.500" stroke="#222" stroke-width="1.300"/></svg>
<span class="t" style="left:156px;top:503px">1</span>
<svg class="i" style="left:194px;top:503px" width="10" height="15" viewBox="0 0 10 15"><path d="M5 15V1M1 5l4-4 4 4" fill="none" stroke="#444"/></svg>
<svg class="i" style="left:223px;top:503px" width="10" height="15" viewBox="0 0 10 15"><path d="M5 0v14M1 10l4 4 4-4" fill="none" stroke="#444"/></svg>
<div class="a" style="left:249px;top:504px;width:1px;height:14px;background:#b5b8c0"></div>
<svg class="i" style="left:263px;top:503px" width="15" height="14" viewBox="0 0 15 14"><path d="M13 0L6 7" stroke="#555" stroke-width="1.600"/><path d="M6 6l3 3-5 5-3-3z" fill="#b8a040"/></svg>
<div class="dd" style="left:281px;top:508px"></div>
<div class="a" style="left:318px;top:506px;border-right:4px solid #888;border-top:4px solid transparent;border-bottom:4px solid transparent"></div>
<div class="a" style="left:329px;top:506px;width:476px;height:9px;background:#c2c3c9"></div>

<!-- output -->
<div class="a" style="left:7px;top:527px;width:926px;height:21px;background:#f5cc84;line-height:22px;padding-left:5px">Output</div>
<div class="a" style="left:7px;top:548px;width:926px;height:26px;background:#ccd5f0"></div>
<span class="t" style="left:14px;top:554px">Show output from:</span>
<div class="combo" style="left:120px;top:551px;width:300px;height:20px;line-height:20px">Debug</div><div class="dd" style="left:410px;top:559px"></div>
<div class="a" style="left:427px;top:552px;width:1px;height:19px;background:#9fabc8"></div>
<svg class="i" style="left:433px;top:552px" width="16" height="18" viewBox="0 0 16 18"><path d="M1 16h14M1 13h14M6 1v8h6M6 5" fill="none" stroke="#a2a9ba"/></svg>
<div class="a" style="left:456px;top:552px;width:1px;height:19px;background:#9fabc8"></div>
<svg class="i" style="left:465px;top:552px" width="14" height="18" viewBox="0 0 14 18"><path d="M1 12h12M1 15h12M1 5h8M4 2L1 5l3 3" fill="none" stroke="#a2a9ba"/></svg>
<svg class="i" style="left:486px;top:552px" width="14" height="18" viewBox="0 0 14 18"><path d="M1 12h12M1 15h12M13 5H5M10 2l3 3-3 3" fill="none" stroke="#a2a9ba"/></svg>
<div class="a" style="left:508px;top:552px;width:1px;height:19px;background:#9fabc8"></div>
<svg class="i" style="left:516px;top:552px" width="16" height="18" viewBox="0 0 16 18"><path d="M8 3h7M8 7h7M1 11h14M1 15h14" stroke="#222"/><path d="M1 2l5 6M6 2L1 8" stroke="#c8283c" stroke-width="1.200"/></svg>
<div class="a" style="left:538px;top:552px;width:1px;height:19px;background:#9fabc8"></div>
<span class="t" style="left:547px;top:551px;font-size:8px;line-height:8px;color:#222">ab<br>c</span>
<svg class="i" style="left:552px;top:553px" width="12" height="16" viewBox="0 0 12 16"><path d="M8 3h3v8H2M5 8l-3 3 3 3" fill="none" stroke="#1c63b8" stroke-width="1.200"/></svg>

<div id="out">
<div style="top:-19px">Microsoft.AspNetCore.Hosting.Diagnostics: Information: Request starting HTTP/2 GET <a>https://localhost:7168/lib/jquery/dist/jquery.min.js</a> - -</div>
<div style="top:3px">Microsoft.AspNetCore.StaticFiles.StaticFileMiddleware: Information: Sending file. Request path: '/lib/jquery/dist/jquery.min.js'. Physical path: 'G:\</div>
<div style="top:18px">Microsoft.AspNetCore.Hosting.Diagnostics: Information: Request finished HTTP/2 GET <a>https://localhost:7168/lib/jquery/dist/jquery.min.js</a> - - - 200</div>
<div style="top:33px">Microsoft.AspNetCore.StaticFiles.StaticFileMiddleware: Information: Sending file. Request path: '/lib/bootstrap/dist/css/bootstrap.min.css'. Physical</div>
<div style="top:48px">Microsoft.AspNetCore.Hosting.Diagnostics: Information: Request finished HTTP/2 GET <a>https://localhost:7168/lib/bootstrap/dist/css/bootstrap.min.css</a> - - -</div>
<div style="top:63px">Microsoft.AspNetCore.Hosting.Diagnostics: Information: Request finished HTTP/2 GET <a>https://localhost:7168/_vs/browserLink</a> - - - 200 - text/javascript</div>
<div style="top:78px">Microsoft.AspNetCore.Hosting.Diagnostics: Information: Request starting HTTP/2 GET <a>https://localhost:7168/favicon.ico</a> - -</div>
<div style="top:93px">Microsoft.AspNetCore.StaticFiles.StaticFileMiddleware: Information: Sending file. Request path: '/favicon.ico'. Physical path: 'G:\OneDrive\</div>
<div style="top:108px">Microsoft.AspNetCore.Hosting.Diagnostics: Information: Request finished HTTP/2 GET <a>https://localhost:7168/favicon.ico</a> - - - 200 5430 image/x-icon</div>
<div style="top:123px"><b>Microsoft.AspNetCore.Hosting.Diagnostics: Information: Request starting HTTP/2 GET <a>https://localhost:7168/?area=Identity&amp;page=%2FAccount%2FLogin</a> - -                    </b></div>
<div style="top:138px"><b>Endpoint: FrontEnd.Controllers.HomeController.Index (FrontEndCode)</b></div>
<div style="top:153px"><b>RoutePattern: {controller=Home}/{action=Index}/{id?}</b></div>
<div style="top:168px"><b>Endpoint Metadata 0: Microsoft.AspNetCore.Mvc.ControllerAttribute</b></div>
<div style="top:183px"><b>Endpoint Metadata 1: Microsoft.AspNetCore.Mvc.Controllers.ControllerActionDescriptor</b></div>
<div style="top:198px"><b>Endpoint Metadata 2: Microsoft.AspNetCore.Routing.DataTokensMetadata</b></div>
<div style="top:213px"><b>Endpoint Metadata 3: Microsoft.AspNetCore.Routing.RouteNameMetadata</b></div>
<div style="top:228px"><b>Endpoint Metadata 4: Microsoft.AspNetCore.Mvc.Filters.ControllerActionFilter</b></div>
<div style="top:243px"><b>Endpoint Metadata 5: Microsoft.AspNetCore.Mvc.ViewFeatures.SaveTempDataAttribute</b></div>
<div style="top:258px"><b>Endpoint Metadata 6: Microsoft.AspNetCore.Mvc.ModelBinding.UnsupportedContentTypeFilter</b></div>
<div style="top:273px"><b>Endpoint Metadata 7: Microsoft.AspNetCore.Routing.SuppressLinkGenerationMetadata</b></div>
<div style="top:288px">Microsoft.AspNetCore.Routing.EndpointMiddleware: Information: Executing endpoint 'FrontEnd.Controllers.HomeController.Index (FrontEndCode)'</div>
<div style="top:303px">Microsoft.AspNetCore.Mvc.Infrastructure.ControllerActionInvoker: Information: Route matched with {action = "Index", controller = "Home", page = ""}.</div>
<div style="top:318px">Microsoft.AspNetCore.Mvc.ViewFeatures.ViewResultExecutor: Information: Executing ViewResult, running view Index.</div>
<div style="top:333px">Microsoft.AspNetCore.Mvc.ViewFeatures.ViewResultExecutor: Information: Executed ViewResult - view Index executed in 33.874ms.</div>
<div style="top:348px">Microsoft.AspNetCore.Mvc.Infrastructure.ControllerActionInvoker: Information: Executed action FrontEnd.Controllers.HomeController.Index (FrontEndCode) in 39.2195ms</div>
<div style="top:363px">Microsoft.AspNetCore.Routing.EndpointMiddleware: Information: Executed endpoint 'FrontEnd.Controllers.HomeController.Index (FrontEndCode)'</div>
<div style="top:378px">Microsoft.AspNetCore.Hosting.Diagnostics: Information: Request finished HTTP/2 GET <a>https://localhost:7168/?area=Identity&amp;page=%2FAccount%2FLogin</a> - - - 200 - text/html;+charset=utf-8 160.2816ms</div>
<div style="top:393px">Microsoft.AspNetCore.Hosting.Diagnostics: Information: Request starting HTTP/2 GET <a>https://localhost:7168/lib/bootstrap/dist/css/bootstrap.min.css</a> - -</div>
</div>
<div class="a" style="left:7px;top:976px;width:1571px;height:14px;background:#e6e7e8"></div>
<div class="a" style="left:23px;top:977px;width:1011px;height:10px;background:#c2c3c9"></div>
<div class="a" style="left:12px;top:978px;border-right:5px solid #888;border-top:4px solid transparent;border-bottom:4px solid transparent"></div>
<div class="a" style="left:1548px;top:978px;border-left:5px solid #888;border-top:4px solid transparent;border-bottom:4px solid transparent"></div>
<div class="a" style="left:1563px;top:912px;width:11px;height:15px;background:#c2c3c9"></div>
<div class="a" style="left:1559px;top:915px;width:19px;height:2px;background:#0000c8"></div>
<div class="dd gr" style="left:1565px;top:964px;border-left-width:4px;border-right-width:4px;border-top-width:5px"></div>

<!-- solution explorer lower -->
<div class="a" style="left:1586px;top:892px;width:310px;height:98px;background:#f5f7fe"></div>
<div class="a" style="left:1896px;top:892px;width:16px;height:98px;background:#e6e7e8"></div>
<div class="dd gr" style="left:1900px;top:978px;border-left-width:4px;border-right-width:4px;border-top-width:5px"></div>
<svg class="i" style="left:1632px;top:897px" width="6" height="10" viewBox="0 0 6 10"><path d="M1 1l4 4-4 4z" fill="#f5f7fe" stroke="#222"/></svg>
<svg class="i" style="left:1632px;top:916px" width="6" height="10" viewBox="0 0 6 10"><path d="M1 1l4 4-4 4z" fill="#f5f7fe" stroke="#222"/></svg>
<svg class="i" style="left:1632px;top:935px" width="6" height="10" viewBox="0 0 6 10"><path d="M1 1l4 4-4 4z" fill="#f5f7fe" stroke="#222"/></svg>
<svg class="i" style="left:1632px;top:954px" width="6" height="10" viewBox="0 0 6 10"><path d="M1 1l4 4-4 4z" fill="#f5f7fe" stroke="#222"/></svg>
<span class="t" style="left:1645px;top:894px;color:#1f8a3a;font-weight:bold">+</span><span class="t" style="left:1655px;top:894px;color:#1b73c4;font-weight:bold">VB</span><span class="t" style="left:1675px;top:894px">CustomRoleStore.vb</span>
<span class="t" style="left:1645px;top:913px;color:#1f8a3a;font-weight:bold">+</span><span class="t" style="left:1655px;top:913px;color:#1b73c4;font-weight:bold">VB</span><span class="t" style="left:1675px;top:913px">CustomUserStore.vb</span>
<span class="t" style="left:1645px;top:932px;color:#1f8a3a;font-weight:bold">+</span><span class="t" style="left:1655px;top:932px;color:#1b73c4;font-weight:bold">VB</span><span class="t" style="left:1675px;top:932px">ICustomRoleStore.vb</span>
<span class="t" style="left:1645px;top:951px;color:#1f8a3a;font-weight:bold">+</span><span class="t" style="left:1655px;top:951px;color:#1b73c4;font-weight:bold">VB</span><span class="t" style="left:1675px;top:951px">ICustomUserStore.vb</span>
<svg class="i" style="left:1596px;top:974px" width="8" height="8" viewBox="0 0 8 8"><path d="M7 1v6H1z" fill="#222"/></svg>
<svg class="i" style="left:1609px;top:974px" width="8" height="8" viewBox="0 0 8 8"><path d="M1 4l2 3 4-6" fill="none" stroke="#c8283c" stroke-width="1.300"/></svg>
<svg class="i" style="left:1619px;top:971px" width="16" height="16" viewBox="0 0 16 16"><path d="M3 1h11v10H8M3 1v5M3 3h11" fill="none" stroke="#333"/><circle cx="5.500" cy="11" r="4" fill="#1c63b8"/><path d="M1.500 11h8M5.500 7v8" stroke="#fff" stroke-width=".7"/></svg>
<span class="t" style="left:1639px;top:970px">FrontEndForm</span>

<!-- bottom tabs -->
<div class="btab" style="left:7px;width:70px">Find "5157"</div>
<div class="btab" style="left:78px;width:152px">Package Manager Console</div>
<div class="btab" style="left:231px;width:49px;background:#fff;color:#1e1e1e;top:990px;height:20px;line-height:21px">Output</div>
<div class="btab" style="left:281px;width:84px">Parallel Stacks</div>
<div class="btab" style="left:367px;width:72px">Breakpoints</div>
<div class="btab" style="left:441px;width:108px">Exception Settings</div>
<div class="btab" style="left:550px;width:114px;font-size:12px">Command Window</div>
<div class="btab" style="left:666px;width:57px">Error List</div>
<div class="btab" style="left:724px;width:41px">Autos</div>
<div class="btab" style="left:767px;width:43px">Locals</div>
<div class="btab" style="left:812px;width:53px">Watch 1</div>
<div class="btab" style="left:1586px;width:100px;background:#fff;color:#1e1e1e;top:990px;height:20px;line-height:21px">Solution Explorer</div>
<div class="btab" style="left:1688px;width:74px">Git Changes</div>
<div class="btab" style="left:1764px;width:63px">Properties</div>

<!-- status bar -->
<div class="a" style="left:0;top:1017px;width:1920px;height:23px;background:#a34c40"></div>
<svg class="i" style="left:4px;top:1020px" width="16" height="17" viewBox="0 0 16 17"><path d="M1 1h14v12H8l-3 3v-3H1z" fill="none" stroke="#fff"/></svg>
<span class="t" style="left:28px;top:1021px;color:#fff;font-size:11.5px">Ready</span>
<svg class="i" style="left:1527px;top:1022px" width="13" height="14" viewBox="0 0 13 14"><path d="M3.500 14V1M1 4l2.500-3L6 4M9.500 0v13M7 10l2.500 3 2.500-3" fill="none" stroke="#fff"/></svg>
<span class="t" style="left:1548px;top:1021px;color:#fff">9 / 0</span><div class="up" style="left:1577px;top:1027px"></div>
<svg class="i" style="left:1609px;top:1022px" width="12" height="14" viewBox="0 0 12 14"><path d="M1 13l1-4 7-8 2 2-7 8z" fill="none" stroke="#fff"/></svg>
<span class="t" style="left:1630px;top:1021px;color:#fff">14</span>
<svg class="i" style="left:1664px;top:1021px" width="13" height="16" viewBox="0 0 13 16"><circle cx="3" cy="2.500" r="2" fill="none" stroke="#fff"/><circle cx="3" cy="13.500" r="2" fill="none" stroke="#fff"/><circle cx="10" cy="3.500" r="2" fill="none" stroke="#fff"/><path d="M3 4.500v7M3 9c3 0 7 0 7-3.500" fill="none" stroke="#fff"/></svg>
<span class="t" style="left:1685px;top:1021px;color:#fff">master</span><div class="up" style="left:1727px;top:1027px"></div>
<svg class="i" style="left:1763px;top:1021px" width="15" height="15" viewBox="0 0 15 15"><path d="M7.500 0l7.500 7.500-7.500 7.500L0 7.500z" fill="#fff"/><path d="M7 3l0 9M7 5l3 3" stroke="#a34c40"/></svg>
<span class="t" style="left:1785px;top:1021px;color:#fff;font-size:11.5px">FrontEndTst</span><div class="up" style="left:1853px;top:1027px"></div>
<svg class="i" style="left:1883px;top:1020px" width="12" height="14" viewBox="0 0 12 14"><path d="M1 11c2-1 1-4 2-7s6-3 7 0 0 6 2 7zM5 12.500h3" fill="none" stroke="#fff"/></svg>
<div class="a" style="left:1891px;top:1027px;width:11px;height:11px;border-radius:50%;background:#fff;color:#222;font-size:10px;font-weight:bold;line-height:11px;text-align:center">1</div>

<!-- browser window -->
<div id="br">
<div class="a" style="left:0;top:0;width:987px;height:44px;background:#f0f0f4"></div>
<div class="a" style="left:43px;top:3px;width:221px;height:37px;background:#fff;border-radius:4px;box-shadow:0 0 3px rgba(0,0,0,.3)"></div>
<svg class="i" style="left:49px;top:15px" width="14" height="15" viewBox="0 0 14 15"><path d="M1 0h8l4 4v11H1z" fill="#eef1f7" stroke="#b8c0d0" stroke-width=".7"/><path d="M1 0h3v15H1z" fill="#bcd3ea"/><path d="M6 7h5M6 10h5" stroke="#c0c6d2"/></svg>
<span class="t" style="left:72px;top:15px;width:165px;overflow:hidden;font-size:11.6px;color:#15141a;-webkit-mask-image:linear-gradient(to right,#000 85%,transparent 100%);mask-image:linear-gradient(to right,#000 85%,transparent 100%)">Home Page - Split Code and View</span>
<svg class="i" style="left:243px;top:18px" width="9" height="9" viewBox="0 0 9 9"><path d="M.5.500l8 8M8.500.500l-8 8" stroke="#222" stroke-width="1.100"/></svg>
<svg class="i" style="left:279px;top:17px" width="11" height="11" viewBox="0 0 11 11"><path d="M5.500 0v11M0 5.500h11" stroke="#444"/></svg>
<div class="a" style="left:905px;top:21px;width:9px;height:1px;background:#222"></div>
<div class="a" style="left:952px;top:17px;width:9px;height:10px;border:1px solid #222"></div>
<div class="a" style="left:0;top:44px;width:987px;height:40px;background:#f9f9fb;border-bottom:1px solid #d0d0d4"></div>
<svg class="i" style="left:17px;top:58px" width="14" height="14" viewBox="0 0 14 14"><path d="M14 7H1M6 2L1 7l5 5" fill="none" stroke="#444" stroke-width="1.100"/></svg>
<svg class="i" style="left:52px;top:58px" width="14" height="14" viewBox="0 0 14 14"><path d="M0 7h13M8 2l5 5-5 5" fill="none" stroke="#a0a0a8" stroke-width="1.100"/></svg>
<svg class="i" style="left:89px;top:58px" width="14" height="14" viewBox="0 0 14 14"><path d="M12 3.500A6 6 0 1 0 13 7M13 0v4H9" fill="none" stroke="#444" stroke-width="1.100"/></svg>
<div class="a" style="left:166px;top:48px;width:620px;height:32px;background:#f0f0f4;border-radius:4px"></div>
<svg class="i" style="left:175px;top:56px" width="14" height="16" viewBox="0 0 14 16"><path d="M1 2l6-1.500L13 2c0 7-1 10-6 13C2 12 1 9 1 2z" fill="none" stroke="#444" stroke-width="1.100"/></svg>
<svg class="i" style="left:201px;top:56px" width="16" height="16" viewBox="0 0 16 16"><path d="M2 7h9v8H2zM4 7V4a2.500 2.500 0 0 1 5 0v3" fill="none" stroke="#444" stroke-width="1.100"/><path d="M12 8l4 8H8z" fill="#333"/></svg>
<span class="t" style="left:228px;top:56px;font-size:14px;color:#6e6e78;line-height:18px">https://<span style="color:#15141a">localhost</span>:7168/?area=Identity&amp;page=%2FAccount%2FLogin</span>
<svg class="i" style="left:763px;top:56px" width="16" height="16" viewBox="0 0 16 16"><path d="M8 1l2 5 5 .5-4 3.500 1.200 5.200L8 12.500 3.800 15.200 5 10 1 6.500 6 6z" fill="none" stroke="#444" stroke-width="1.100"/></svg>
<svg class="i" style="left:850px;top:57px" width="14" height="14" viewBox="0 0 14 14"><path d="M1 1h12v5a6 7 0 0 1-12 0zM4.500 5L7 7.500 9.500 5" fill="none" stroke="#444" stroke-width="1.100"/></svg>
<div class="a" style="left:885px;top:56px;width:15px;height:16px;background:#8a2500"></div>
<svg class="i" style="left:887px;top:58px" width="11" height="12" viewBox="0 0 11 12"><circle cx="5.500" cy="6" r="2.500" fill="#e8932a"/><path d="M5.500 0v12M0 6h11M1.500 2l8 8M9.500 2l-8 8" stroke="#e8932a" stroke-width=".8"/></svg>
<svg class="i" style="left:922px;top:55px" width="15" height="18" viewBox="0 0 15 18"><path d="M10 0c1 3 3 5 3 9-1 5-9 9-12 7 3-1 2-3 3-5 1-3 4-4 6-11z" fill="#e8ac4c"/><path d="M4 10c2 1 4 3 4 6-3 1-5 1-7 0 2-1 3-3 3-6z" fill="#eed8a8"/></svg>
<svg class="i" style="left:957px;top:56px" width="16" height="16" viewBox="0 0 16 16"><path d="M1 1h14v14H1z" fill="#fff" stroke="#2fb5b0" stroke-width="1.800"/><path d="M4 1h8v5H4z" fill="#2fb5b0"/></svg>

<span class="t" style="left:12px;top:104px;font-size:20px;line-height:24px;color:#212529">Frontend</span>
<span class="t" style="left:116px;top:107px;font-size:15.8px;line-height:18px;color:#212529">Home</span>
<span class="t" style="left:175px;top:107px;font-size:15px;line-height:18px;color:#212529">Privacy</span>
<span class="t" style="left:893px;top:107px;font-size:15.6px;line-height:18px;color:#212529">Register</span>
<span class="t" style="left:966px;top:107px;font-size:15.6px;line-height:18px;color:#212529">Login</span>
<div class="a" style="left:0;top:142px;width:987px;height:1px;background:#dee2e6"></div>
<span class="t" style="left:414px;top:160px;font-size:52px;line-height:66px;transform:scaleX(.91);transform-origin:left;color:#212529;-webkit-text-stroke:.7px #fff">Welcome</span>
<span class="t" style="left:332px;top:233px;font-size:15.75px;line-height:18px;color:#212529">Learn about <a style="color:#0d6efd;text-decoration:underline">building Web apps with ASP.NET Core</a>.</span>
<div class="a" style="left:0;top:284px;width:987px;height:1px;background:#dee2e6"></div>
<span class="t" style="left:46px;top:290px;font-size:15.8px;line-height:18px;color:#6c757d">© 2022 - Split Code and View - <a style="color:#0d6efd;text-decoration:underline">Privacy</a></span>
<div class="a" style="left:0;top:731px;width:333px;height:21px;background:#f9f9fb;border-top:1px solid #e0e0e4;border-right:1px solid #e0e0e4"></div>
<span class="t" style="left:5px;top:734px;color:#333;font-size:12.3px">https://localhost:7168/?area=Identity&amp;page=/Account/Login</span>
</div>
</body></html>
